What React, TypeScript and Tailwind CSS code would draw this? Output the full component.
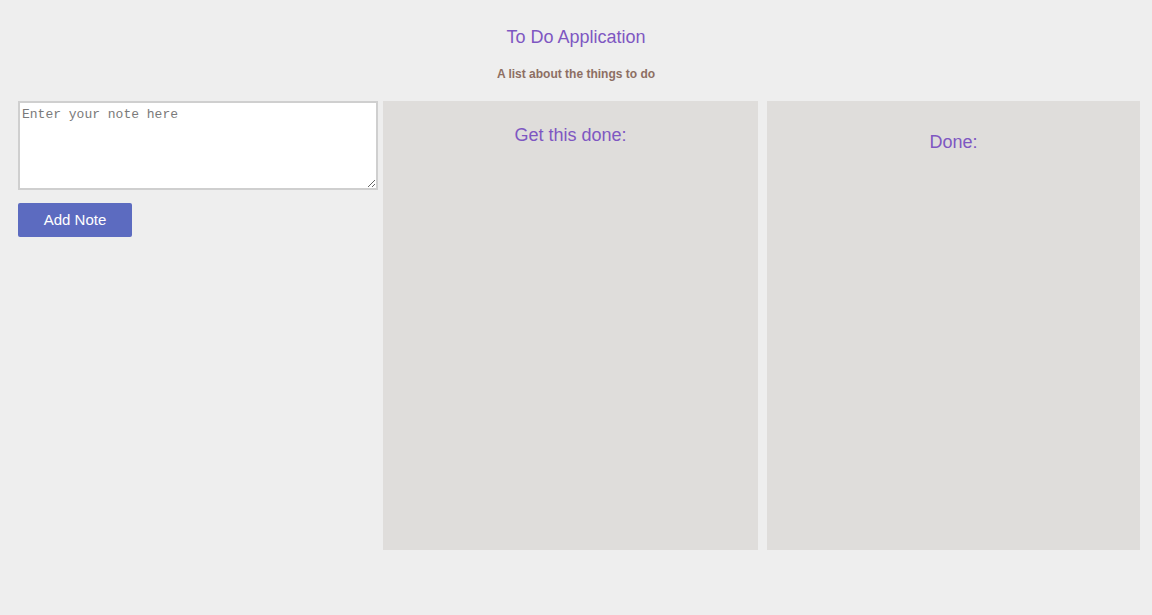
export default function App() {
  return (
    <div className="min-h-screen bg-[#eeeeee] font-['Liberation_Sans',Arial,sans-serif]">
      {/* Header */}
      <h1 className="pt-[26px] text-center text-[18px] leading-[22px] font-normal text-[#7e57c2]">
        To Do Application
      </h1>
      <p className="mt-[19px] text-center text-[12px] leading-[14px] font-bold text-[#8d6e63]">
        A list about the things to do
      </p>

      {/* Board */}
      <div className="mt-[20px] flex pl-[18px] pr-[12px]">
        <div className="w-[360px] shrink-0">
          <textarea
            placeholder="Enter your note here"
            className="block h-[89px] w-full border-2 border-[#cfcfcf] bg-white px-[2px] pt-[4px] pb-[1px] font-['Liberation_Mono',monospace] text-[13px] leading-[16px] text-gray-800 placeholder:text-[#7a7a7a] outline-none"
          />
          <button className="mt-[13px] h-[34px] w-[114px] rounded-[2px] bg-[#5c6bc0] text-[15px] text-white">
            Add Note
          </button>
        </div>

        <div className="ml-[5px] h-[449px] w-[375px] shrink-0 bg-[#dfdddb] pt-[23px]">
          <h2 className="text-center text-[18px] leading-[22px] text-[#7e57c2]">Get this done:</h2>
        </div>

        <div className="ml-[9px] h-[449px] w-[373px] shrink-0 bg-[#dfdddb] pt-[30px]">
          <h2 className="text-center text-[18px] leading-[22px] text-[#7e57c2]">Done:</h2>
        </div>
      </div>
    </div>
  );
}
